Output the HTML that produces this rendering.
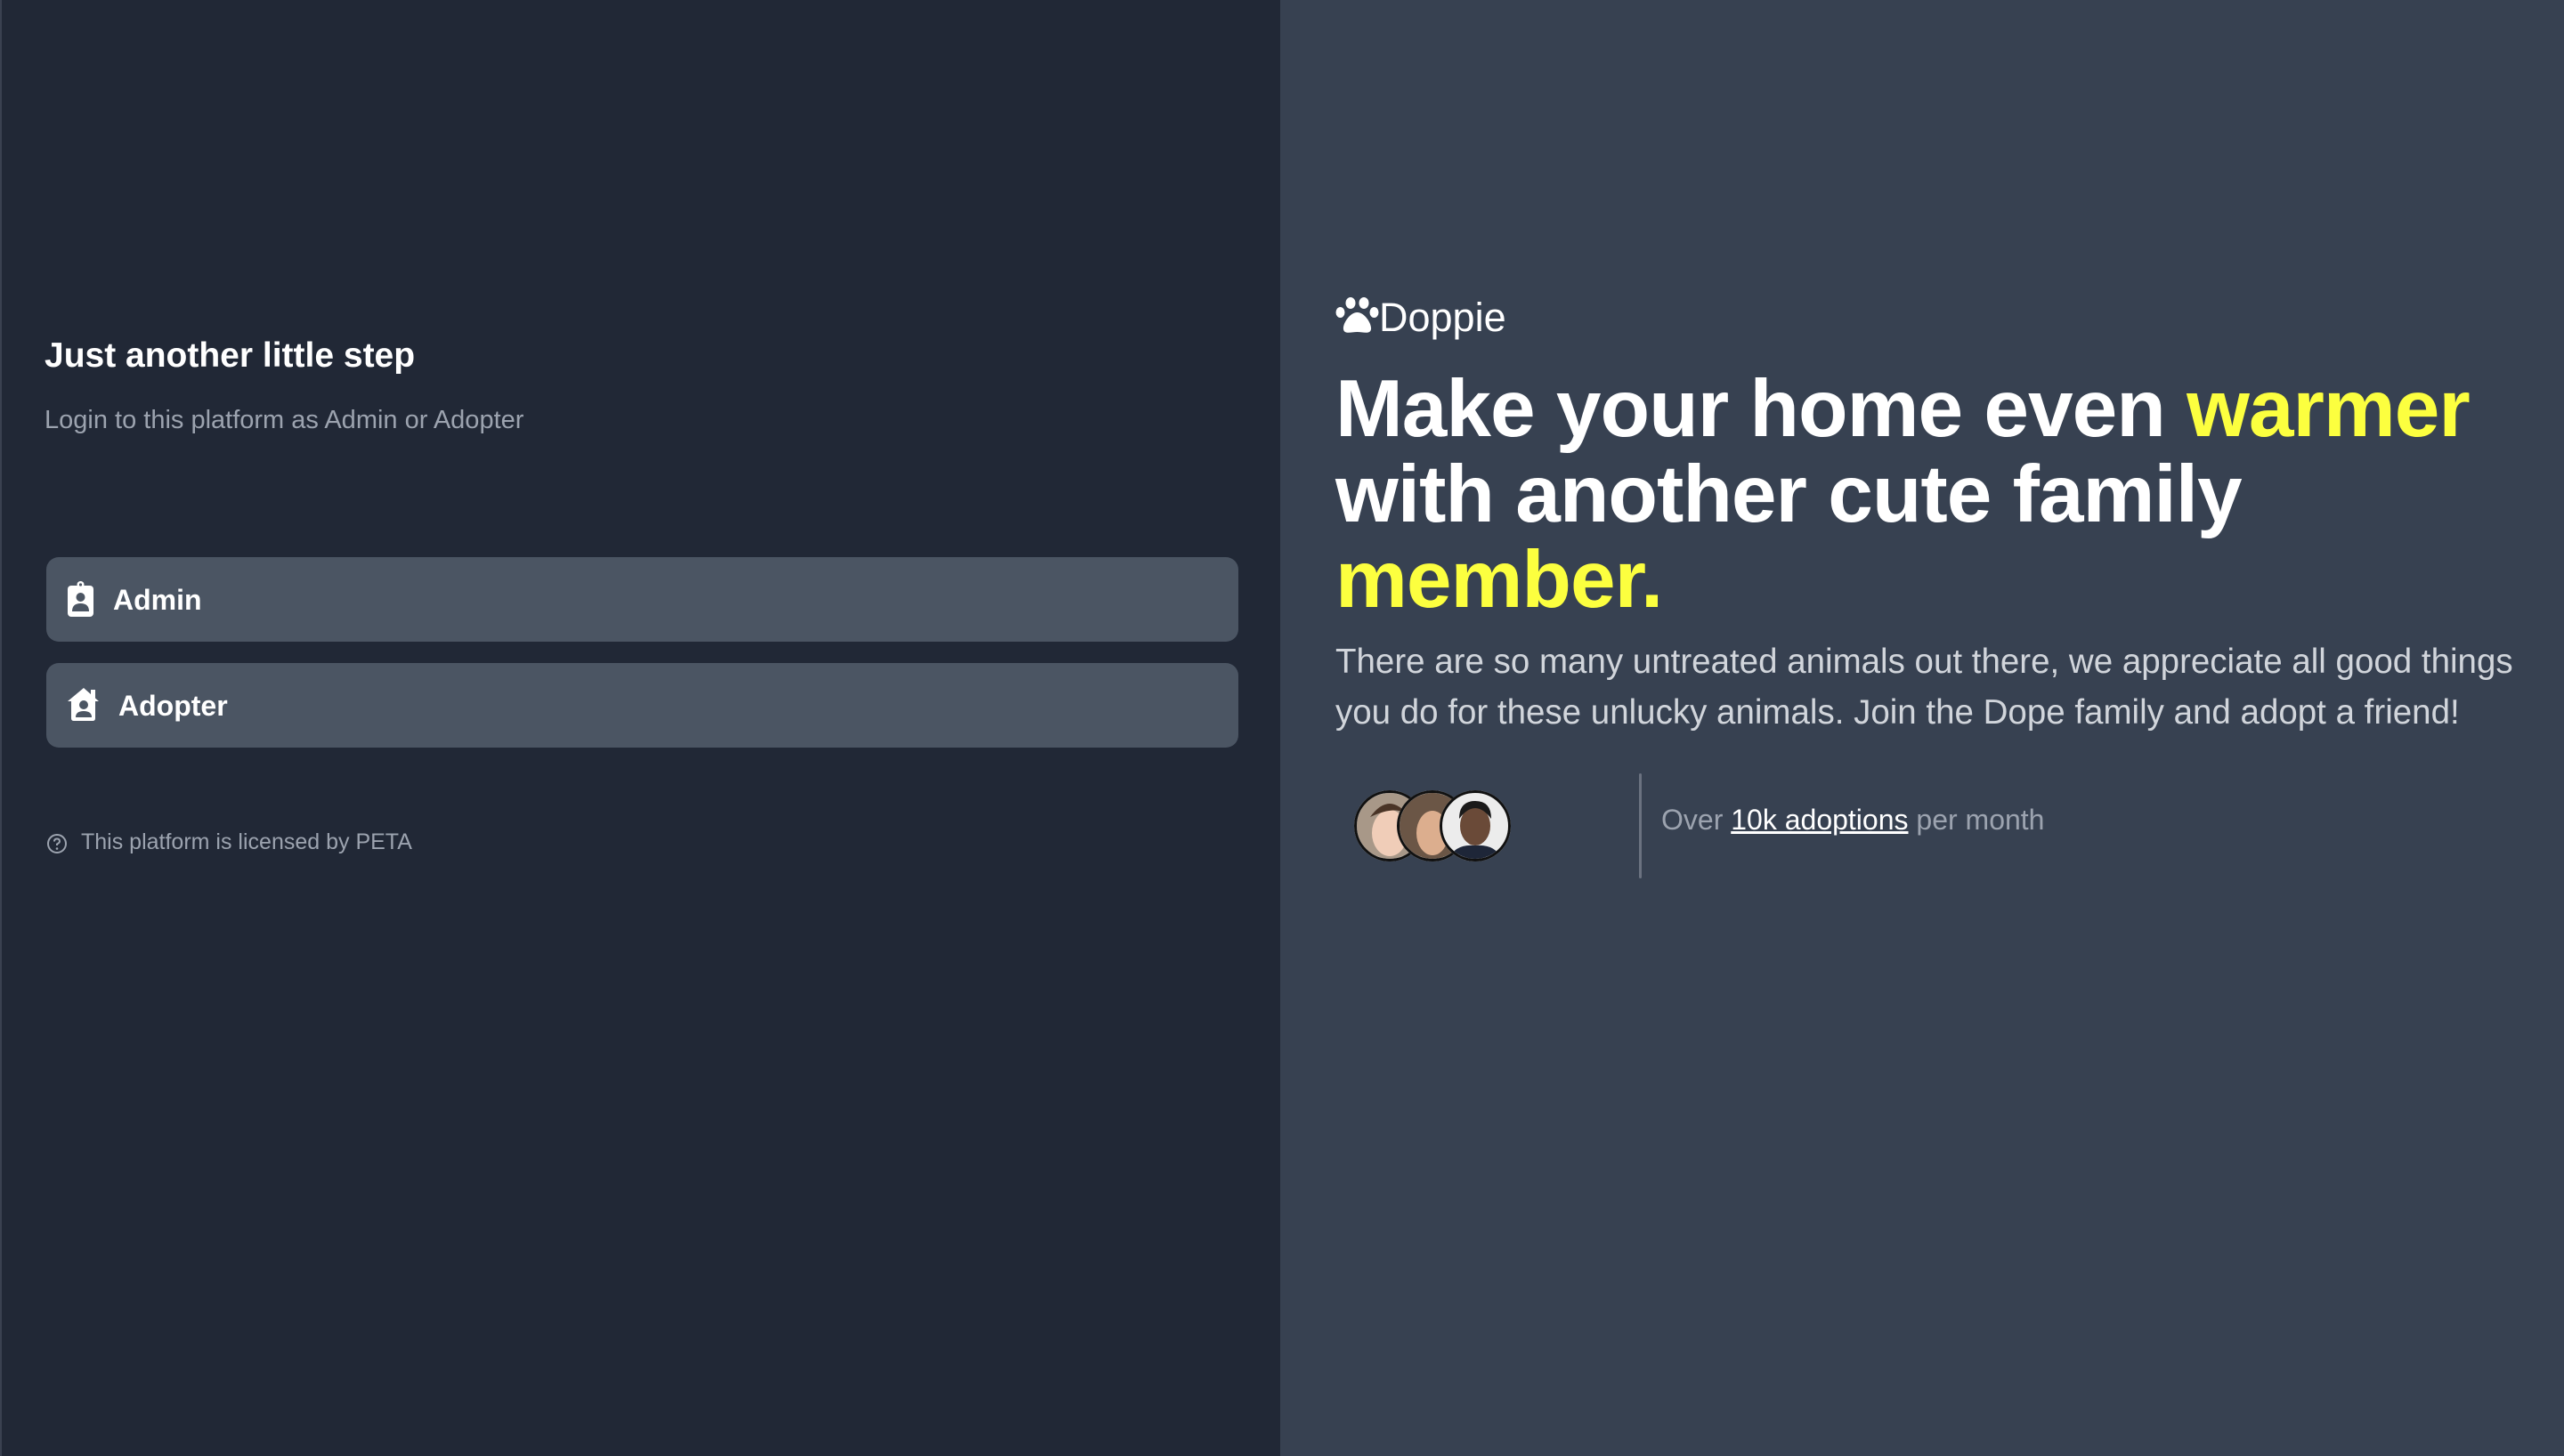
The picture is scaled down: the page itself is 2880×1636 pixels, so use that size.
<!DOCTYPE html>
<html><head><meta charset="utf-8"><style>
*{margin:0;padding:0;box-sizing:border-box}
body{width:2880px;height:1636px;overflow:hidden;font-family:"Liberation Sans",sans-serif;background:#374151;position:relative}
.left{position:absolute;left:0;top:0;width:1438px;height:1636px;background:#212836;border-left:2px solid #3a4150}
.right{position:absolute;left:1438px;top:0;right:0;height:1636px;background:#374151}
.abs{position:absolute;white-space:nowrap}
.btn{position:absolute;left:50px;width:1339px;height:95px;background:#4b5563;border-radius:14px;color:#fff;font-weight:bold;font-size:32px}
.btn svg{position:absolute;top:26px}
.btn span{position:absolute;top:30px;line-height:36px}
</style></head><body>
<div class="left">
 <div class="abs" style="left:48px;top:378px;font-size:39px;font-weight:bold;color:#fff">Just another little step</div>
 <div class="abs" style="left:48px;top:456px;font-size:29px;color:#9ca3af">Login to this platform as Admin or Adopter</div>
 <div class="btn" style="top:626px">
  <svg style="left:23px" width="32" height="42" viewBox="0 0 32 42"><rect x="1" y="6" width="29" height="35" rx="4" fill="#fff"/><circle cx="15.5" cy="5" r="4" fill="#fff"/><circle cx="15.5" cy="5" r="1.6" fill="#4b5563"/><circle cx="15.5" cy="19" r="5" fill="#4b5563"/><path d="M6 35 Q6 26 15.5 26 Q25 26 25 35 Z" fill="#4b5563"/></svg>
  <span style="left:75px">Admin</span>
 </div>
 <div class="btn" style="top:745px">
  <svg style="left:23px" width="38" height="40" viewBox="0 0 38 40"><path d="M19 2 L36 17 L32 17 L32 36 Q32 39 29 39 L8 39 Q5 39 5 36 L5 17 L1 17 Z" fill="#fff"/><rect x="27" y="4" width="5" height="10" fill="#fff"/><circle cx="19" cy="21" r="5" fill="#4b5563"/><path d="M10 35 Q10 28 19 28 Q28 28 28 35 Z" fill="#4b5563"/></svg>
  <span style="left:81px">Adopter</span>
 </div>
 <svg class="abs" style="left:50px;top:936px" width="24" height="24" viewBox="0 0 24 24"><circle cx="12" cy="12" r="10" fill="none" stroke="#9ca3af" stroke-width="2"/><path d="M9 9.5 Q9 6.5 12 6.5 Q15 6.5 15 9.3 Q15 11 12 12.5 L12 14" fill="none" stroke="#9ca3af" stroke-width="2"/><circle cx="12" cy="17.5" r="1.3" fill="#9ca3af"/></svg>
 <div class="abs" style="left:89px;top:932px;font-size:25px;color:#9ca3af">This platform is licensed by PETA</div>
</div>
<div class="right">
 <svg class="abs" style="left:62px;top:334px" width="50" height="42" viewBox="0 0 50 42"><ellipse cx="5.5" cy="17" rx="5" ry="6" fill="#fff"/><ellipse cx="17" cy="6.5" rx="5.5" ry="6.5" fill="#fff"/><ellipse cx="32" cy="6.5" rx="5.5" ry="6.5" fill="#fff"/><ellipse cx="43.5" cy="17" rx="5" ry="6" fill="#fff"/><path d="M24.5 17 C16 17 8 30 9 36 C10 42 18 39 24.5 39 C31 39 39 42 40 36 C41 30 33 17 24.5 17 Z" fill="#fff"/></svg>
 <div class="abs" style="left:111px;top:331px;font-size:45px;color:#fff">Doppie</div>
 <div class="abs" style="left:62px;top:412px;font-size:91px;line-height:96px;font-weight:bold;color:#fff;letter-spacing:-1px;white-space:normal;width:1360px">Make your home even <span style="color:#fcff3f">warmer</span><br>with another cute family<br><span style="color:#fcff3f">member.</span></div>
 <div class="abs" style="left:62px;top:715px;font-size:38.5px;line-height:57px;color:#d1d5db;white-space:normal;width:1420px">There are so many untreated animals out there, we appreciate all good things<br>you do for these unlucky animals. Join the Dope family and adopt a friend!</div>
 <svg class="abs" style="left:81px;top:886px" width="180" height="84" viewBox="0 0 180 84">
  <defs><clipPath id="c"><circle r="37"/></clipPath></defs>
  <g transform="translate(42,42)"><circle r="40" fill="#fff"/><g clip-path="url(#c)"><rect x="-40" y="-40" width="80" height="80" fill="#a89888"/><ellipse cx="0" cy="8" rx="20" ry="26" fill="#f0cdb8"/><path d="M-22 -10 Q0 -40 22 -10 Q10 -25 -22 -10Z" fill="#4a3426"/></g><circle r="38.5" fill="none" stroke="#111" stroke-width="3"/></g>
  <g transform="translate(90,42)"><circle r="40" fill="#fff"/><g clip-path="url(#c)"><rect x="-40" y="-40" width="80" height="80" fill="#6b5646"/><ellipse cx="0" cy="8" rx="18" ry="25" fill="#dcae8e"/></g><circle r="38.5" fill="none" stroke="#111" stroke-width="3"/></g>
  <g transform="translate(138,42)"><circle r="40" fill="#fff"/><g clip-path="url(#c)"><rect x="-40" y="-40" width="80" height="80" fill="#ececec"/><ellipse cx="0" cy="0" rx="17" ry="22" fill="#6a4a38"/><path d="M-18 -8 Q0 -32 18 -8 Q18 -28 0 -28 Q-18 -28 -18 -8Z" fill="#1a1a1a"/><path d="M-30 40 Q-25 20 0 22 Q25 20 30 40Z" fill="#1e2638"/></g><circle r="38.5" fill="none" stroke="#111" stroke-width="3"/></g>
 </svg>
 <div class="abs" style="left:403px;top:869px;width:3px;height:118px;background:#6b7280;border-radius:2px"></div>
 <div class="abs" style="left:428px;top:903px;font-size:32px;color:#9ca3af">Over <span style="color:#fff;text-decoration:underline">10k adoptions</span> per month</div>
</div>
</body></html>
